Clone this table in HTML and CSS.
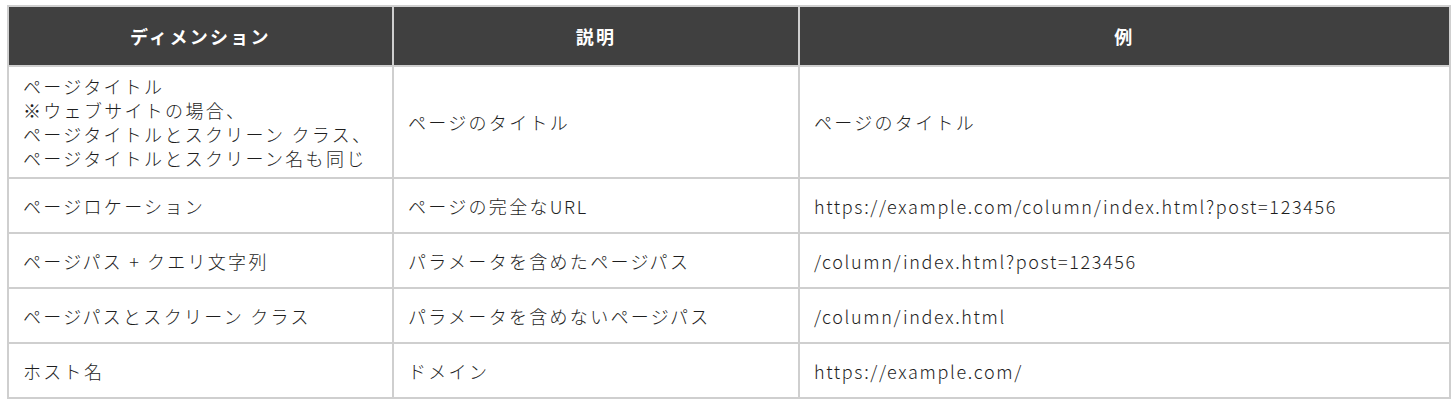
FILE: index.html
```html
<!DOCTYPE html>
<html lang="ja">
<head>
<meta charset="utf-8">
<link rel="stylesheet" href="styles.css">
</head>
<body>
<div class="wrap">
<table class="dims">
<colgroup><col class="c1"><col class="c2"><col class="c3"></colgroup>
<thead>
<tr><th>ディメンション</th><th>説明</th><th>例</th></tr>
</thead>
<tbody>
<tr class="tall"><td>ページタイトル<br>※ウェブサイトの場合、<br>ページタイトルとスクリーン クラス、<br>ページタイトルとスクリーン名も同じ</td><td>ページのタイトル</td><td>ページのタイトル</td></tr>
<tr><td>ページロケーション</td><td>ページの完全な<span class="lat">URL</span></td><td class="lat">https://example.com/column/index.html?post=123456</td></tr>
<tr><td>ページパス <span class="lat">+</span> クエリ文字列</td><td>パラメータを含めたページパス</td><td class="lat">/column/index.html?post=123456</td></tr>
<tr><td>ページパスとスクリーン クラス</td><td>パラメータを含めないページパス</td><td class="lat">/column/index.html</td></tr>
<tr><td>ホスト名</td><td>ドメイン</td><td class="lat">https://example.com/</td></tr>
</tbody>
</table>
</div>
</body>
</html>
```

FILE: styles.css
```css
html, body { margin: 0; padding: 0; background: #fff; }
.wrap { padding: 5px 0 0 7px; }
.dims {
  border-collapse: collapse;
  table-layout: fixed;
  width: 1442px;
  font-family: "Noto Sans CJK JP", "Noto Sans", sans-serif;
  font-size: 18px;
  letter-spacing: 2.3px;
  color: #1e1e1e;
}
.c1 { width: 385px; }
.c2 { width: 406px; }
.c3 { width: 651px; }
.dims th, .dims td { border: 2px solid #cfcfcf; }
.dims th {
  background: #404040;
  color: #fff;
  font-weight: bold;
  height: 58px;
  padding: 0 14px;
  text-align: center;
  line-height: 24px;
}
.dims td {
  height: 37px;
  padding: 8px 14px 8px 14px;
  line-height: 24px;
  text-align: left;
  vertical-align: middle;
  font-weight: 300;
}
.dims .tall td { padding-top: 7px; padding-bottom: 7px; }
.dims .lat { letter-spacing: 1.65px; }
```
